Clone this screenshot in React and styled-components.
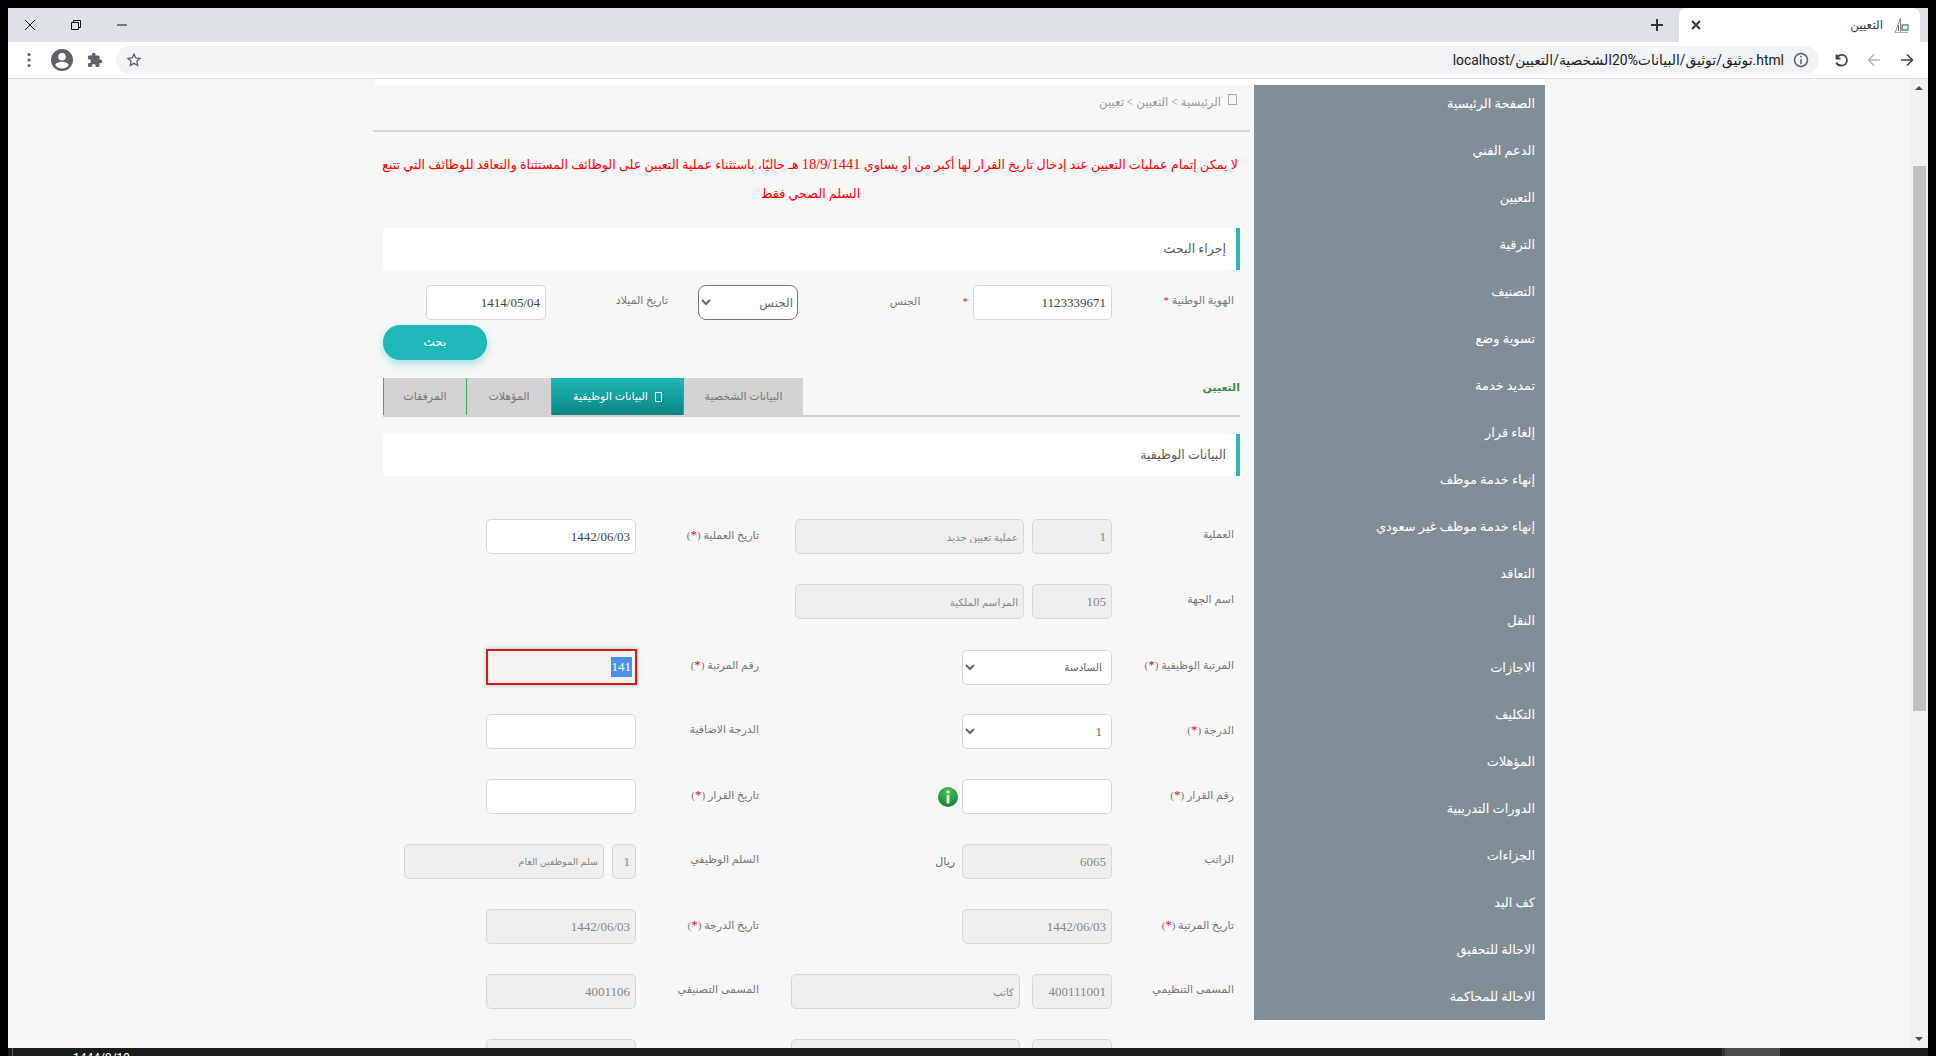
import React from 'react'
import styled, { createGlobalStyle } from 'styled-components'

const GlobalStyle = createGlobalStyle`
  html, body {
    margin: 0;
    padding: 0;
    background: #000;
    overflow: hidden;
  }
  * {
    box-sizing: border-box;
  }
`

const sans = `Roboto, "DejaVu Sans", sans-serif`
const serif = `"Liberation Serif", "DejaVu Sans", serif`

const menu = [
  'الصفحة الرئيسية',
  'الدعم الفني',
  'التعيين',
  'الترقية',
  'التصنيف',
  'تسوية وضع',
  'تمديد خدمة',
  'إلغاء قرار',
  'إنهاء خدمة موظف',
  'إنهاء خدمة موظف غير سعودي',
  'التعاقد',
  'النقل',
  'الاجازات',
  'التكليف',
  'المؤهلات',
  'الدورات التدريبية',
  'الجزاءات',
  'كف اليد',
  'الاحالة للتحقيق',
  'الاحالة للمحاكمة',
]

const Frame = styled.div`
  width: 1936px;
  height: 1056px;
  padding: 8px 8px 0;
  background: #000;
  display: flex;
  flex-direction: column;
  overflow: hidden;
`
const TabStrip = styled.div`
  height: 34px;
  flex: none;
  background: #dee1e6;
  display: flex;
  align-items: stretch;
  justify-content: space-between;
  padding-right: 8px;
`
const WindowButtons = styled.div`
  display: flex;
  align-items: center;
  gap: 30px;
  padding-left: 14px;
`
const WinIcon = styled.svg`
  width: 16px;
  height: 16px;
  display: block;
  fill: none;
  stroke: #111;
  stroke-width: 1;
`
const StripRight = styled.div`
  display: flex;
  align-items: center;
`
const PlusIcon = styled.svg`
  width: 14px;
  height: 14px;
  margin-right: 15px;
  stroke: #333;
  stroke-width: 2;
`
const ActiveTab = styled.div`
  width: 241px;
  height: 34px;
  background: #fff;
  border-radius: 8px 8px 0 0;
  display: flex;
  direction: rtl;
  align-items: center;
  padding: 0 11px 0 10px;
  gap: 9px;
`
const TabTitle = styled.span`
  font: 12px ${sans};
  color: #3c3c3c;
  flex: 1;
`
const TabClose = styled.svg`
  width: 10px;
  height: 10px;
  stroke: #333;
  stroke-width: 2;
  margin-left: 2px;
`
const Logo = styled.svg`
  width: 17px;
  height: 17px;
`
const Toolbar = styled.div`
  height: 37px;
  flex: none;
  background: #fff;
  border-bottom: 1px solid #dadce0;
  display: flex;
  align-items: center;
  padding: 0 0 1px 13px;
`
const ToolIcon = styled.svg`
  display: block;
  flex: none;
  width: ${(p) => p.$size || 16}px;
  height: ${(p) => p.$size || 16}px;
  margin-left: ${(p) => p.$left || 0}px;
  margin-right: ${(p) => p.$right || 0}px;
`
const ToolButtons = styled.div`
  display: flex;
  align-items: center;
  gap: ${(p) => p.$gap}px;
  margin-left: ${(p) => p.$left || 0}px;
`
const AddressBar = styled.div`
  width: 1703px;
  height: 28px;
  margin-left: 14px;
  border-radius: 14px;
  background: #f1f3f4;
  display: flex;
  align-items: center;
  justify-content: space-between;
  padding-right: 10px;
`
const Url = styled.span`
  font: 13.9px ${sans};
  color: #202124;
  margin-left: auto;
  margin-right: 9px;
  direction: ltr;
  unicode-bidi: plaintext;
`
const Viewport = styled.div`
  flex: 1;
  min-height: 0;
  display: flex;
  background: #f7f7f7;
  overflow: hidden;
`
const Page = styled.div`
  flex: 1;
  display: flex;
  justify-content: flex-end;
  padding-right: 365px;
  overflow: hidden;
`
const Shell = styled.div`
  width: 1172px;
  flex: none;
`
const TopStrip = styled.div`
  height: 6px;
  margin-left: 2px;
  background: #fff;
`
const Columns = styled.div`
  display: flex;
  direction: rtl;
  align-items: flex-start;
`
const Sidebar = styled.nav`
  width: 291px;
  height: 935px;
  flex: none;
  background: #828e96;
  overflow: hidden;
`
const MenuList = styled.ul`
  list-style: none;
  margin: -4px 0 0;
  padding: 0;
`
const MenuItem = styled.li`
  height: 47px;
  padding-right: 10px;
  font: 12.9px/47px ${serif};
  color: #fff;
  white-space: nowrap;
`
const Main = styled.main`
  width: 881px;
  flex: none;
  padding: 0 14px 0 10px;
`
const Breadcrumb = styled.div`
  height: 47px;
  margin: 0 -10px;
  border-bottom: 2px solid #d8d8d8;
  display: flex;
  align-items: flex-start;
  gap: 7px;
  padding: 9px 13px 0 0;
  font: 11.7px ${serif};
  color: #999;
`
const MissingGlyph = styled.span`
  display: inline-block;
  width: ${(p) => p.$w}px;
  height: ${(p) => p.$h}px;
  border: 1px solid ${(p) => p.$color};
  flex: none;
`
const CrumbText = styled.span`
  margin-top: 1px;
`
const Notice = styled.p`
  margin: 19px 0 19px;
  padding-right: 2px;
  text-align: center;
  color: #f00;
  font: 12.7px/29px ${serif};
  white-space: nowrap;
`
const NoticeDate = styled.span`
  font-size: 14.5px;
  line-height: 1;
`
const SectionHeader = styled.div`
  height: 42px;
  margin-top: ${(p) => p.$top || 0}px;
  background: #fff;
  border-right: 4px solid #2db5b5;
  display: flex;
  align-items: center;
  padding-right: 10px;
  font: 12.6px ${serif};
  color: #5c5c5c;
`
const SearchRow = styled.div`
  display: grid;
  grid-template-columns: 128px 139px 175px 100px 152px 120px;
  height: 35px;
  margin-top: 15px;
  align-items: center;
`
const FieldLabel = styled.label`
  font: 11px ${serif};
  color: #777;
  padding-right: ${(p) => p.$pad || 6}px;
  padding-bottom: 4px;
  white-space: nowrap;
`
const Star = styled.span`
  color: #d01030;
  font-size: ${(p) => p.$size || 11}px;
`
const GenderCell = styled.div`
  display: flex;
  align-items: center;
  gap: 42px;
  padding: 0 5px 3px 0;
  font: 11px ${serif};
  color: #777;
`
const Field = styled.input`
  width: ${(p) => p.$w || 150}px;
  height: 35px;
  flex: none;
  border: 1px solid #d8d8d8;
  border-radius: 5px;
  background: ${(p) => (p.$off ? '#eeeeee' : '#fff')};
  color: ${(p) => (p.$off ? '#888' : '#444')};
  padding: 0 5px;
  text-align: right;
  direction: rtl;
  font: ${(p) => p.$size || 13}px ${serif};
  outline: none;
`
const GenderSelect = styled.select`
  width: 100px;
  height: 35px;
  border: 1px solid #767676;
  border-radius: 8px;
  background: #fff;
  color: #666;
  font: 12px ${serif};
  padding: 0;
  direction: rtl;
  outline: none;
`
const FormSelect = styled.select`
  width: 150px;
  height: 35px;
  border: 1px solid #d8d8d8;
  border-radius: 5px;
  background: #fff;
  color: #666;
  font: ${(p) => p.$size || 13}px ${serif};
  padding: 0 5px;
  direction: rtl;
  outline: none;
`
const ButtonRow = styled.div`
  display: flex;
  justify-content: flex-end;
  margin-top: 5px;
`
const SearchButton = styled.button`
  width: 104px;
  height: 35px;
  border: 0;
  border-radius: 17px;
  background: #1fb8b8;
  color: #fff;
  font: 12px ${serif};
  box-shadow: 0 4px 8px rgba(31, 184, 184, 0.35);
`
const TabsRow = styled.div`
  height: 39px;
  margin-top: 18px;
  border-bottom: 2px solid #d5cfd2;
  display: flex;
  justify-content: space-between;
`
const TabsHeading = styled.h4`
  margin: 0;
  font: bold 11px/19px ${serif};
  color: #3f8f4f;
`
const TabList = styled.div`
  display: flex;
  height: 37px;
`
const TabItem = styled.div`
  width: ${(p) => p.$w}px;
  height: 37px;
  display: flex;
  align-items: center;
  justify-content: center;
  gap: 7px;
  font: 11px ${serif};
  color: ${(p) => (p.$active ? '#fff' : '#777')};
  background: ${(p) => (p.$active ? 'linear-gradient(#20b8b5, #0a8585)' : '#d3d3d3')};
  border-left: 1px solid #43a85c;
`
const FormSection = styled.div`
  margin-top: 43px;
`
const FormRow = styled.div`
  display: grid;
  grid-template-columns: 128px 347px 129px 253px;
  height: 35px;
  margin-bottom: 30px;
  align-items: center;
`
const Controls = styled.div`
  display: flex;
  align-items: center;
  gap: ${(p) => p.$gap || 8}px;
`
const Unit = styled.span`
  font: 11px ${serif};
  color: #666;
`
const InfoIcon = styled.svg`
  width: 20px;
  height: 20px;
  flex: none;
`
const FocusedField = styled.div`
  width: 151px;
  height: 36px;
  margin-right: -1px;
  align-self: start;
  border: 2px solid #e01212;
  background: #f2f2f2;
  box-shadow: 0 0 4px rgba(32, 184, 184, 0.6);
  display: flex;
  align-items: center;
  padding-right: 3px;
  font: 13px ${serif};
`
const Selected = styled.span`
  background: #4a90e8;
  color: #fff;
  padding: 2px 1px;
`
const Scrollbar = styled.div`
  width: 18px;
  flex: none;
  background: #f1f1f1;
  position: relative;
`
const ScrollThumb = styled.div`
  position: absolute;
  left: 3px;
  right: 2px;
  top: 87px;
  height: 545px;
  background: #c1c1c1;
`
const ScrollArrow = styled.div`
  position: absolute;
  left: 5px;
  ${(p) => (p.$down ? 'bottom: 7px;' : 'top: 7px;')}
  width: 0;
  height: 0;
  border-left: 4px solid transparent;
  border-right: 4px solid transparent;
  ${(p) => (p.$down ? 'border-top: 4px solid #505050;' : 'border-bottom: 4px solid #505050;')}
`
const Taskbar = styled.div`
  height: 8px;
  flex: none;
  background: #1c1c1c;
  display: flex;
  overflow: hidden;
`
const TaskEdge = styled.div`
  width: 1px;
  margin-left: 4px;
  background: #555;
`
const TaskClock = styled.span`
  margin-left: 60px;
  margin-top: 3px;
  font: 12px/14px ${sans};
  color: #fff;
`
const TaskChip = styled.div`
  width: 58px;
  margin-left: auto;
  margin-right: 148px;
  border-left: 3px solid #333;
  background: #4a4a4a;
`

const Req = ({ children }) => (
  <FieldLabel>
    {children} (<Star $size={13}>*</Star>)
  </FieldLabel>
)

const Info = () => (
  <InfoIcon viewBox="0 0 20 20">
    <defs>
      <radialGradient id="infoGrad" cx="0.5" cy="0.25" r="0.85">
        <stop offset="0" stopColor="#4cc35c" />
        <stop offset="1" stopColor="#087a2a" />
      </radialGradient>
    </defs>
    <circle cx="10" cy="10" r="10" fill="url(#infoGrad)" />
    <circle cx="10" cy="5" r="1.7" fill="#f2f2f2" />
    <rect x="8.6" y="8" width="2.8" height="8.5" fill="#f2f2f2" />
  </InfoIcon>
)

export default function App() {
  return (
    <>
      <GlobalStyle />
      <Frame>
        <TabStrip>
          <WindowButtons>
            <WinIcon viewBox="0 0 16 16"><path d="M3 3l10 10M13 3L3 13" /></WinIcon>
            <WinIcon viewBox="0 0 16 16"><path d="M5.5 5.5V3.5h7v7h-2M3.5 5.5h7v7h-7z" /></WinIcon>
            <WinIcon viewBox="0 0 16 16"><path d="M3 8h10" /></WinIcon>
          </WindowButtons>
          <StripRight>
            <PlusIcon viewBox="0 0 14 14"><path d="M7 1v12M1 7h12" /></PlusIcon>
            <ActiveTab>
              <Logo viewBox="0 0 17 17">
                <path d="M3 16L8.5 1v14" fill="none" stroke="#8c8f7e" strokeWidth="1" />
                <rect x="6" y="8" width="1" height="6" fill="#7a6f5a" />
                <path d="M10 8h6v5h-6z" fill="none" stroke="#4f8ea6" strokeWidth="1.4" />
                <path d="M3 15.5h13" stroke="#9fb4bd" strokeWidth="1" />
              </Logo>
              <TabTitle>التعيين</TabTitle>
              <TabClose viewBox="0 0 10 10"><path d="M1 1l8 8M9 1L1 9" /></TabClose>
            </ActiveTab>
          </StripRight>
        </TabStrip>
        <Toolbar>
          <ToolButtons $gap={10}>
            <ToolIcon viewBox="0 0 16 16" fill="#5f6368">
              <circle cx="8" cy="2.5" r="1.6" /><circle cx="8" cy="8" r="1.6" /><circle cx="8" cy="13.5" r="1.6" />
            </ToolIcon>
            <ToolIcon $size={22} $left={4} $right={3} viewBox="0 0 22 22" fill="#5f6368">
              <path fillRule="evenodd" d="M11 0a11 11 0 100 22 11 11 0 000-22zm0 4a3.8 3.8 0 110 7.6A3.8 3.8 0 0111 4zm0 15.4a8.4 8.4 0 01-6.6-3.2c.1-2.2 4.4-3.4 6.6-3.4s6.5 1.2 6.6 3.4a8.4 8.4 0 01-6.6 3.2z" />
            </ToolIcon>
            <ToolIcon viewBox="0 0 16 16" fill="#5f6368">
              <path d="M14.5 7.5h-1V4.8c0-.7-.6-1.3-1.3-1.3H9.5v-1a1.8 1.8 0 00-3.6 0v1H3.2c-.7 0-1.3.6-1.3 1.3v2.5h1a2 2 0 010 4h-1v2.5c0 .7.6 1.3 1.3 1.3h2.5v-1a2 2 0 014 0v1h2.5c.7 0 1.3-.6 1.3-1.3v-2.7h1a1.8 1.8 0 000-3.6z" />
            </ToolIcon>
          </ToolButtons>
          <AddressBar>
            <ToolIcon $left={10} viewBox="0 0 24 24" fill="none" stroke="#5f6368" strokeWidth="2">
              <path d="M12 3l2.7 5.9 6.3.7-4.7 4.3 1.3 6.3L12 17l-5.6 3.2 1.3-6.3L3 9.6l6.3-.7z" />
            </ToolIcon>
            <Url>localhost/توثيق/توثيق/البيانات%20الشخصية/التعيين.html</Url>
            <ToolIcon viewBox="0 0 16 16" fill="none" stroke="#5f6368" strokeWidth="1.5">
              <circle cx="8" cy="8" r="6.5" />
              <path d="M8 7v5M8 4v1.6" />
            </ToolIcon>
          </AddressBar>
          <ToolButtons $gap={17} $left={14}>
            <ToolIcon viewBox="0 0 16 16" fill="none" stroke="#444" strokeWidth="1.8">
              <path d="M3.5 2.5v4h4M3.8 6.2A5.3 5.3 0 118 13.5a5.3 5.3 0 01-4.8-3" />
            </ToolIcon>
            <ToolIcon viewBox="0 0 16 16" fill="none" stroke="#b5b5b5" strokeWidth="1.6">
              <path d="M14 8H2.5M8 2.5L2.5 8 8 13.5" />
            </ToolIcon>
            <ToolIcon viewBox="0 0 16 16" fill="none" stroke="#444" strokeWidth="1.6">
              <path d="M2 8h11.5M8 2.5L13.5 8 8 13.5" />
            </ToolIcon>
          </ToolButtons>
        </Toolbar>
        <Viewport>
          <Page>
            <Shell>
              <TopStrip />
              <Columns>
                <Sidebar>
                  <MenuList>
                    {menu.map((item) => (
                      <MenuItem key={item}>{item}</MenuItem>
                    ))}
                  </MenuList>
                </Sidebar>
                <Main>
                  <Breadcrumb>
                    <MissingGlyph $w={9} $h={11} $color="#aaa" />
                    <CrumbText>الرئيسية &gt; التعيين &gt; تعيين</CrumbText>
                  </Breadcrumb>
                  <Notice>
                    لا يمكن إتمام عمليات التعيين عند إدخال تاريخ القرار لها أكبر من أو يساوي <NoticeDate>18/9/1441</NoticeDate> هـ حاليًا، باستثناء عملية التعيين على الوظائف المستثناة والتعاقد للوظائف التي تتبع
                    <br />
                    السلم الصحي فقط
                  </Notice>
                  <SectionHeader>إجراء البحث</SectionHeader>
                  <SearchRow>
                    <FieldLabel>الهوية الوطنية <Star>*</Star></FieldLabel>
                    <Field readOnly value="1123339671" $w={139} />
                    <GenderCell><Star>*</Star><span>الجنس</span></GenderCell>
                    <GenderSelect defaultValue="g">
                      <option value="g">الجنس</option>
                    </GenderSelect>
                    <FieldLabel $pad={30}>تاريخ الميلاد</FieldLabel>
                    <Field readOnly value="1414/05/04" $w={120} />
                  </SearchRow>
                  <ButtonRow>
                    <SearchButton>بحث</SearchButton>
                  </ButtonRow>
                  <TabsRow>
                    <TabsHeading>التعيين</TabsHeading>
                    <TabList>
                      <TabItem $w={120}>البيانات الشخصية</TabItem>
                      <TabItem $w={132} $active>
                        <MissingGlyph $w={7} $h={10} $color="#fff" />
                        البيانات الوظيفية
                      </TabItem>
                      <TabItem $w={85}>المؤهلات</TabItem>
                      <TabItem $w={83}>المرفقات</TabItem>
                    </TabList>
                  </TabsRow>
                  <SectionHeader $top={17}>البيانات الوظيفية</SectionHeader>
                  <FormSection>
                    <FormRow>
                      <FieldLabel>العملية</FieldLabel>
                      <Controls>
                        <Field readOnly $off value="1" $w={80} />
                        <Field readOnly $off $size={10.3} value="عملية تعيين جديد" $w={229} />
                      </Controls>
                      <Req>تاريخ العملية</Req>
                      <Field readOnly value="1442/06/03" />
                    </FormRow>
                    <FormRow>
                      <FieldLabel>اسم الجهة</FieldLabel>
                      <Controls>
                        <Field readOnly $off value="105" $w={80} />
                        <Field readOnly $off $size={10.3} value="المراسم الملكية" $w={229} />
                      </Controls>
                    </FormRow>
                    <FormRow>
                      <Req>المرتبة الوظيفية</Req>
                      <Controls>
                        <FormSelect $size={10.5} defaultValue="6">
                          <option value="6">السادسة</option>
                        </FormSelect>
                      </Controls>
                      <Req>رقم المرتبة</Req>
                      <FocusedField><Selected>141</Selected></FocusedField>
                    </FormRow>
                    <FormRow>
                      <Req>الدرجة</Req>
                      <Controls>
                        <FormSelect defaultValue="1">
                          <option value="1">1</option>
                        </FormSelect>
                      </Controls>
                      <FieldLabel>الدرجة الاضافية</FieldLabel>
                      <Field readOnly value="" />
                    </FormRow>
                    <FormRow>
                      <Req>رقم القرار</Req>
                      <Controls $gap={4}>
                        <Field readOnly value="" />
                        <Info />
                      </Controls>
                      <Req>تاريخ القرار</Req>
                      <Field readOnly value="" />
                    </FormRow>
                    <FormRow>
                      <FieldLabel>الراتب</FieldLabel>
                      <Controls $gap={7}>
                        <Field readOnly $off value="6065" />
                        <Unit>ريال</Unit>
                      </Controls>
                      <FieldLabel>السلم الوظيفي</FieldLabel>
                      <Controls>
                        <Field readOnly $off value="1" $w={24} />
                        <Field readOnly $off $size={9.5} value="سلم الموظفين العام" $w={200} />
                      </Controls>
                    </FormRow>
                    <FormRow>
                      <Req>تاريخ المرتبة</Req>
                      <Controls>
                        <Field readOnly $off value="1442/06/03" />
                      </Controls>
                      <Req>تاريخ الدرجة</Req>
                      <Field readOnly $off value="1442/06/03" />
                    </FormRow>
                    <FormRow>
                      <FieldLabel>المسمى التنظيمي</FieldLabel>
                      <Controls $gap={12}>
                        <Field readOnly $off value="400111001" $w={80} />
                        <Field readOnly $off $size={10.3} value="كاتب" $w={229} />
                      </Controls>
                      <FieldLabel>المسمى التصنيفي</FieldLabel>
                      <Field readOnly $off value="4001106" />
                    </FormRow>
                    <FormRow>
                      <FieldLabel />
                      <Controls $gap={12}>
                        <Field readOnly $off value="" $w={80} />
                        <Field readOnly $off value="" $w={229} />
                      </Controls>
                      <FieldLabel />
                      <Field readOnly $off value="" />
                    </FormRow>
                  </FormSection>
                </Main>
              </Columns>
            </Shell>
          </Page>
          <Scrollbar>
            <ScrollArrow />
            <ScrollThumb />
            <ScrollArrow $down />
          </Scrollbar>
        </Viewport>
        <Taskbar>
          <TaskEdge />
          <TaskClock>1444/9/19</TaskClock>
          <TaskChip />
        </Taskbar>
      </Frame>
    </>
  )
}
